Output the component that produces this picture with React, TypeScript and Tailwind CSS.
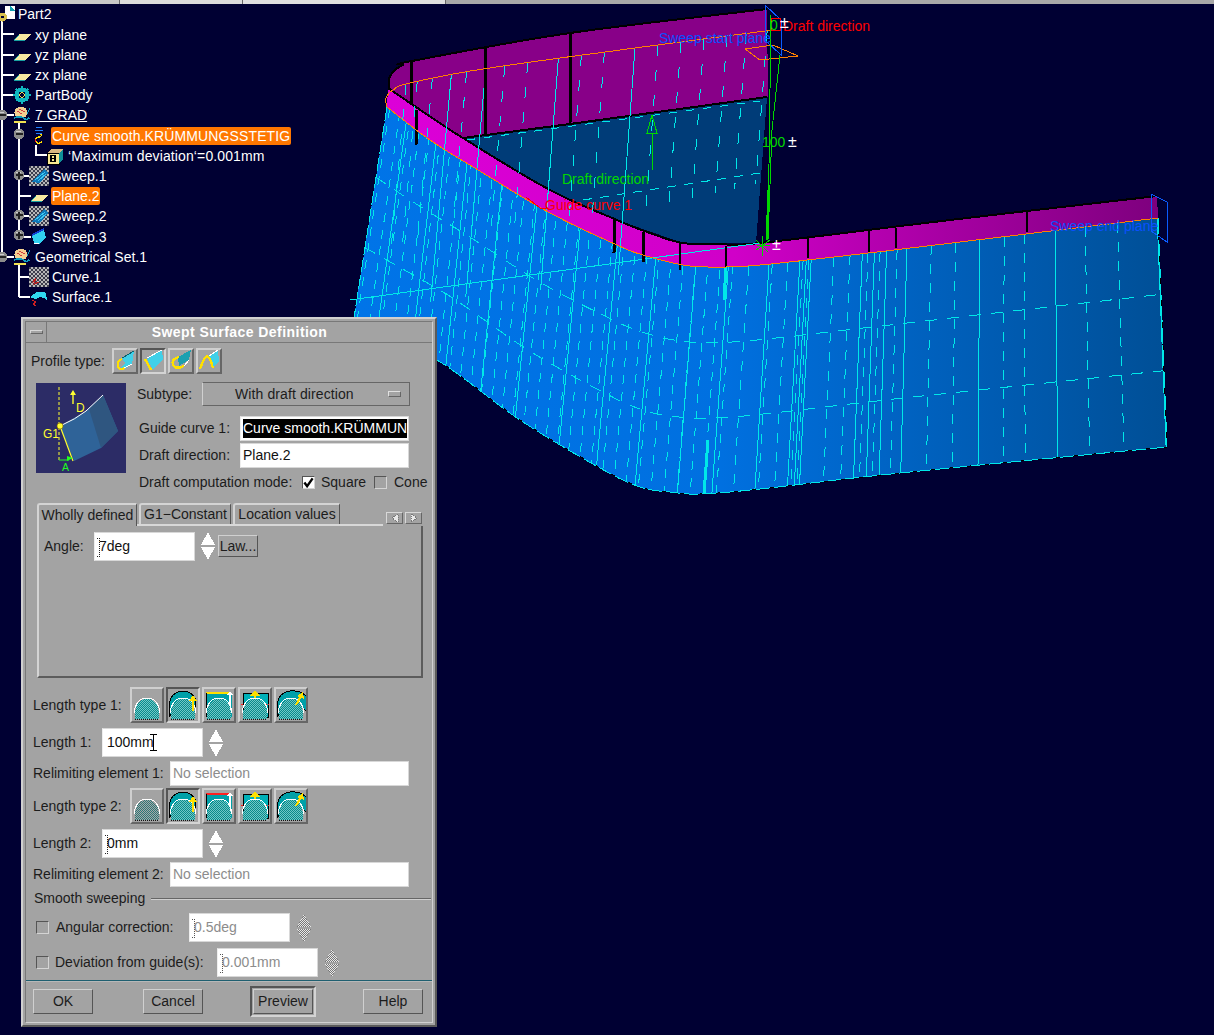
import React from "react";

type P = [number, number];
const FONT = { fontFamily: '"Liberation Sans", Arial, sans-serif' };

function smooth(p: P[], n = 8): P[] {
  const out: P[] = [];
  for (let i = 0; i < p.length - 1; i++) {
    const a = p[Math.max(i - 1, 0)], b = p[i], c = p[i + 1], d = p[Math.min(i + 2, p.length - 1)];
    for (let k = 0; k < n; k++) {
      const t = k / n, t2 = t * t, t3 = t2 * t;
      const f = (j: 0 | 1) => 0.5 * (2 * b[j] + (c[j] - a[j]) * t + (2 * a[j] - 5 * b[j] + 4 * c[j] - d[j]) * t2 + (3 * b[j] - a[j] - 3 * c[j] + d[j]) * t3);
      out.push([+f(0).toFixed(1), +f(1).toFixed(1)]);
    }
  }
  out.push(p[p.length - 1]);
  return out;
}

const sheetTop = smooth([[387,107],[430,140],[483,173],[550,213],[617,245],[643,255],[683,265],[717,267],[760,265],[860,254],[960,242],[1158,218]]);
const sheetBot = smooth([[354,318],[437,360],[520,420],[600,468],[640,487],[670,492],[700,494],[760,489],[900,473],[1167,447]]);
const rimU = smooth([[393,92],[410,83],[483,69],[620,50],[773,30]]);
const rimV = smooth([[370,320],[440,300],[540,290],[650,268],[757,243]]);
const blackCurve = smooth([[388,88],[413,105],[463,138],[550,190],[617,220],[650,233],[683,243],[720,244],[760,243],[950,220],[1157,196]]);
const purpleTop = smooth([[389,90],[389,79],[395,70],[403,65],[412,61],[570,33],[767,9]]);

function at(poly: P[], t: number): P {
  let total = 0;
  for (let i = 1; i < poly.length; i++) total += Math.hypot(poly[i][0]-poly[i-1][0], poly[i][1]-poly[i-1][1]);
  let s = t * total;
  for (let i = 1; i < poly.length; i++) {
    const l = Math.hypot(poly[i][0]-poly[i-1][0], poly[i][1]-poly[i-1][1]);
    if (s <= l || i === poly.length-1) {
      const k = s / (l || 1);
      return [poly[i-1][0]+(poly[i][0]-poly[i-1][0])*k, poly[i-1][1]+(poly[i][1]-poly[i-1][1])*k];
    }
    s -= l;
  }
  return poly[poly.length-1];
}
const pts = (p: P[]) => p.map(q => q.join(",")).join(" ");
const seg = (a: P[], b: P[], t: number, v0 = 0, v1 = 1) => {
  const A = at(a,t), B = at(b,t);
  const m = (v:number) => [A[0]+(B[0]-A[0])*v, A[1]+(B[1]-A[1])*v].map(n=>n.toFixed(1)).join(",");
  return `M${m(v0)} L${m(v1)}`;
};
const across = (v:number) => {
  const out:string[] = [];
  for (let i=0;i<=100;i++){ const A=at(sheetTop,i/100),B=at(sheetBot,i/100); out.push(`${(A[0]+(B[0]-A[0])*v).toFixed(1)},${(A[1]+(B[1]-A[1])*v).toFixed(1)}`);}
  return "M"+out.join(" L");
};

const solid = [.03,.075,.12,.17,.22,.28,.33,.38,.43,.47,.52,.558,.566,.572,.635,.65,.665,.69,.78,.873,.999];
const dashedRight = [.495,.524,.543,.562,.569,.6,.62,.642,.657,.678,.72,.75,.81,.835,.91,.95];
const dashedLeft = Array.from({ length: 32 }, (_, i) => +(0.004 + i * 0.0152).toFixed(4));
const backSolid = [.16,.25,.44,.64];
const backDash = [.04,.07,.11,.2,.3,.36,.5,.56,.7,.76,.82,.88,.93,.985];

function Canvas() {
  return (
    <svg className="absolute left-0 top-0" width="1214" height="1035" viewBox="0 0 1214 1035" shapeRendering="crispEdges" style={FONT}>
      <defs>
        <linearGradient id="sheet" gradientUnits="userSpaceOnUse" x1="356" y1="0" x2="1167" y2="0">
          <stop offset="0" stopColor="#0074e8"/><stop offset=".45" stopColor="#0070e0"/><stop offset="1" stopColor="#004f96"/>
        </linearGradient>
        <linearGradient id="strip" gradientUnits="userSpaceOnUse" x1="388" y1="0" x2="1157" y2="0">
          <stop offset="0" stopColor="#dc00d8"/><stop offset=".45" stopColor="#d000c8"/><stop offset="1" stopColor="#7e007e"/>
        </linearGradient>
      </defs>
      <polygon points={pts([...purpleTop, [768,97],[570,124],[463,138],[413,105]])} fill="#880088"/>
      <polygon points="463,138 570,124 767,97 756,243 683,243 617,220 550,190" fill="#003c78"/>
      <polygon points={pts([...blackCurve, ...[...sheetTop].reverse()])} fill="url(#strip)"/>
      <polygon points={pts([...sheetTop, [1167,447], ...[...sheetBot].reverse()])} fill="url(#sheet)"/>

      <polyline points={pts(purpleTop)} fill="none" stroke="#000" strokeWidth="2"/>
      <path d="M463,138 L570,124 L767,97" fill="none" stroke="#000" strokeWidth="2"/>
      <polyline points={pts(blackCurve)} fill="none" stroke="#000" strokeWidth="2"/>

      <g stroke="#00e8e8" strokeWidth="1" fill="none">
        {solid.map(t => <path key={t} d={seg(sheetTop, sheetBot, t)}/>)}
        {dashedRight.map(t => <path key={t} d={seg(sheetTop, sheetBot, t)} strokeDasharray="10 9"/>)}
        {dashedLeft.map((t, i) => <path key={t} d={seg(sheetTop, sheetBot, t)} strokeDasharray="9 8" strokeDashoffset={i * 5}/>)}
        <path d={across(1/3)} strokeDasharray="12 10"/>
        <path d={across(2/3)} strokeDasharray="12 10"/>
        {backSolid.map(t => <path key={t} d={seg(rimU, rimV, t)}/>)}
        {backDash.map(t => <path key={t} d={seg(rimU, rimV, t, 0, .72)} strokeDasharray="11 14"/>)}
        <path d="M467,140 L760,101" strokeDasharray="8 9"/>
        <path d="M583,200 L760,173" strokeDasharray="9 8"/>
        <path d="M350,300 L760,243"/>
        <path d="M704,494 L708,440" strokeWidth="3"/>
        <path d="M726,267 L724,300" strokeWidth="3"/>
        <path d="M387,107 L354,318" strokeDasharray="14 3"/>
      </g>
      <polyline points={pts(sheetBot)} fill="none" stroke="#000" strokeWidth="1"/>
      <polyline points={pts(sheetBot)} fill="none" stroke="#00e8e8" strokeWidth="1" strokeDasharray="14 4"/>
      <path d="M1158,218 L1167,447" stroke="#000" fill="none"/>
      <path d="M1158,218 L1167,447" stroke="#00e8e8" fill="none" strokeDasharray="16 6"/>

      <g stroke="#000" strokeWidth="3" fill="none">
        <path d="M412,62 L411,105"/><path d="M485,47 L485,135"/><path d="M571,33 L570,124"/>
        <path d="M417,110 L416,145"/><path d="M615,220 L614,253"/><path d="M643,232 L643,262"/>
        <path d="M680,243 L680,270" strokeWidth="2"/><path d="M726,246 L726,267" strokeWidth="2"/>
        <path d="M808,238 L808,258" strokeWidth="2"/><path d="M869,231 L869,252" strokeWidth="2"/>
        <path d="M896,228 L896,248" strokeWidth="2"/><path d="M1027,212 L1027,232" strokeWidth="2"/>
      </g>
      <polyline points={pts(sheetTop)} fill="none" stroke="#ff8000" strokeWidth="1"/>
      <polyline points={pts(smooth([[387,107],[386,98],[393,90],[410,83],[483,69],[620,50],[773,30]]))} fill="none" stroke="#ff8000" strokeWidth="1"/>

      <polygon points="745,49 773,45 798,56 760,60" fill="none" stroke="#ff8000"/>
      <polygon points="765,5 781,20 781,55 765,40" fill="none" stroke="#0a5cff"/>
      <polygon points="1151,194 1167,202 1167,242 1151,231" fill="none" stroke="#0a5cff"/>

      <g stroke="#00d800" fill="none">
        <path d="M771,15 L768,240" strokeWidth="1"/>
        <path d="M780,55 L772,130 L768,240" strokeWidth="1"/>
        <path d="M768,190 L767,240" strokeWidth="2"/>
        <path d="M652,170 L652,133"/>
        <polygon points="652,115 657,133 647,133"/>
        <path d="M756,240 L768,252 M756,250 L770,240 M762,236 L762,256 M757,245 L770,246"/>
      </g>
      <path d="M526,197 L540,208 L547,208" fill="none" stroke="#ff0000"/>
      <rect x="771" y="18" width="9" height="12" fill="none" stroke="#ff0000"/>

      <g fontSize="14">
        <text x="659" y="43" fill="#0a50ff">Sweep start plane</text>
        <text x="783" y="31" fill="#ff0000">Draft direction</text>
        <text x="562" y="184" fill="#00d800">Draft direction</text>
        <text x="545" y="210" fill="#ff0000">Guide curve 1</text>
        <text x="1050" y="231" fill="#0a50ff">Sweep end plane</text>
        <text x="762" y="147" fill="#00d800">100</text>
        <text x="770" y="30" fill="#00d800">0</text>
      </g>
      <g fontSize="16" fill="#fff">
        <text x="788" y="147">±</text>
        <text x="780" y="28">±</text>
        <text x="772" y="250">±</text>
      </g>
    </svg>
  );
}

/* ---------- tree icons ---------- */
const Ico = ({ children }: { children: React.ReactNode }) => (
  <svg className="w-[18px] h-[18px] shrink-0" viewBox="0 0 18 18" shapeRendering="crispEdges">{children}</svg>
);
const PlaneIco = () => <Ico><polygon points="1,14 13,14 18,8 6,8" fill="#f8e8a0"/><path d="M1,14 L12,14 M1,14 L6,9" stroke="#1aa0a0" fill="none"/></Ico>;
const GearIco = () => <Ico><circle cx="9" cy="9" r="7.5" fill="#10b8c0"/><path d="M9,0 V18 M0,9 H18 M3,3 L15,15 M15,3 L3,15" stroke="#10b8c0" strokeWidth="2"/><circle cx="9" cy="9" r="3.4" fill="#000033"/><circle cx="9" cy="9" r="2.2" fill="none" stroke="#f0e050"/></Ico>;
const SetIco = () => <Ico><ellipse cx="8" cy="6.5" rx="6.5" ry="6" fill="#f4d090"/><path d="M4,5 L9,8 M6,3 L12,6" stroke="#d04040"/><path d="M1,12 Q7,9 12,13 Q14,14 16,12" stroke="#10a0c0" strokeWidth="1.5" fill="none"/><path d="M1,16 H13" stroke="#f0e050" strokeWidth="2"/><path d="M14,8 L17,2" stroke="#10a0c0"/></Ico>;
const SmoothIco = () => <Ico><path d="M6,1 L12,0 M5,4 L13,3 M6,6 H12" stroke="#2080ff" fill="none"/><path d="M10,7 Q13,9 9,10 Q3,12 7,16 Q11,17 12,14" stroke="#ffe000" strokeWidth="1.4" fill="none"/><path d="M5,12 L5,15" stroke="#ff2020"/></Ico>;
const Checker = ({id}:{id:string}) => <><defs><pattern id={id} width="4" height="4" patternUnits="userSpaceOnUse"><rect width="4" height="4" fill="#b8b8b8"/><rect width="2" height="2" fill="#3c3c4c"/><rect x="2" y="2" width="2" height="2" fill="#3c3c4c"/></pattern></defs><rect x="0" y="0" width="20" height="20" fill={`url(#${id})`}/></>;
const SweepIco = ({id}:{id:string}) => <svg className="w-[20px] h-[20px] shrink-0 -mx-px" viewBox="0 0 20 20" shapeRendering="crispEdges"><Checker id={id}/><polygon points="3,16 15,3 19,7 11,17" fill="#0f78b8"/><path d="M6,14 L16,6 M9,15 L17,8" stroke="#40c8f0"/></svg>;
const Sweep3Ico = () => <Ico><polygon points="2,8 14,2 16,10 9,16 4,15" fill="#30d0f0"/><path d="M2,7 L14,1" stroke="#1040d0" strokeWidth="2"/><path d="M4,15 L9,16" stroke="#fff"/></Ico>;
const Curve1Ico = () => <svg className="w-[20px] h-[20px] shrink-0 -mx-px" viewBox="0 0 20 20" shapeRendering="crispEdges"><Checker id="chk-curve"/><path d="M3,16 L7,11 L5,17 L10,15" stroke="#c02020" fill="none"/></svg>;
const SurfIco = () => <Ico><path d="M1,9 Q7,1 16,5 L17,12 Q11,7 6,11 L1,10 Z" fill="#30d8f0"/><path d="M2,12 L6,14 L3,16 L6,18" stroke="#d02020" fill="none"/></Ico>;
const CubeIco = () => <Ico><polygon points="1,6 5,2 17,2 17,12 13,17 1,17" fill="#d8b880"/><rect x="1" y="6" width="12" height="11" fill="#f8e890" stroke="#000"/><polygon points="13,6 17,2 17,12 13,17" fill="#109098"/><path d="M5,8.5 H9 V14.5 H5 Z M5,11.5 H9" stroke="#000" fill="none" strokeWidth="1.4"/></Ico>;
const PartIco = () => <svg className="w-[16px] h-[18px] shrink-0" viewBox="0 0 16 18" shapeRendering="crispEdges"><rect x="5" y="1" width="10" height="13" fill="#fff"/><polygon points="10,1 15,6 10,6" fill="#10a0b0"/><circle cx="2.5" cy="12" r="4.5" fill="#d8c050"/><circle cx="2.5" cy="12" r="1.5" fill="#000033"/></svg>;

type Row = { label: string; level: number; icon: React.ReactNode; hl?: boolean; u?: boolean; wide?: boolean };
const rows: Row[] = [
  { label: "Part2", level: 0, icon: <PartIco/> },
  { label: "xy plane", level: 1, icon: <PlaneIco/> },
  { label: "yz plane", level: 1, icon: <PlaneIco/> },
  { label: "zx plane", level: 1, icon: <PlaneIco/> },
  { label: "PartBody", level: 1, icon: <GearIco/> },
  { label: "7 GRAD", level: 1, icon: <SetIco/>, u: true },
  { label: "Curve smooth.KRÜMMUNGSSTETIG", level: 2, icon: <SmoothIco/>, hl: true, wide: true },
  { label: "‘Maximum deviation‘=0.001mm", level: 3, icon: <CubeIco/>, wide: true },
  { label: "Sweep.1", level: 2, icon: <SweepIco id="chk-s1"/> },
  { label: "Plane.2", level: 2, icon: <PlaneIco/>, hl: true },
  { label: "Sweep.2", level: 2, icon: <SweepIco id="chk-s2"/> },
  { label: "Sweep.3", level: 2, icon: <Sweep3Ico/> },
  { label: "Geometrical Set.1", level: 1, icon: <SetIco/> },
  { label: "Curve.1", level: 2, icon: <Curve1Ico/> },
  { label: "Surface.1", level: 2, icon: <SurfIco/> },
];
const indent = ["pl-0", "pl-[13px]", "pl-[30px]", "pl-[46px]"];

const Knob = ({ x, y, plus }: { x: number; y: number; plus?: boolean }) => (
  <g>
    <circle cx={x} cy={y} r="5.5" fill="#8c8c8c"/>
    <path d={`M${x-3},${y-3} h5`} stroke="#ccc"/>
    <path d={`M${x-3.5},${y} h7`} stroke="#222" strokeWidth="1.4"/>
    {plus && <path d={`M${x},${y-3.5} v7`} stroke="#222" strokeWidth="1.4"/>}
  </g>
);

function Tree() {
  return (
    <div className="absolute left-0 top-[4.4px] w-[320px]" style={FONT}>
      <svg className="absolute left-0 top-[-4.4px]" width="60" height="310" shapeRendering="crispEdges">
        <g stroke="#fff" strokeWidth="2" fill="none">
          <path d="M2,20 V257"/>
          <path d="M2,34 H14 M2,55 H14 M2,75 H14 M2,95 H14"/>
          <path d="M19,122 V237 M19,176 H31 M19,196 H31 M19,216 H31 M19,237 H31"/>
          <path d="M2,115 H14 M2,257 H14"/>
          <path d="M19,263 V297 M19,277 H30 M19,297 H30"/>
          <path d="M36,145 V155 H47"/>
        </g>
        <Knob x={2} y={115}/><Knob x={2} y={257}/>
        <Knob x={19} y={134}/><Knob x={19} y={175} plus/><Knob x={19} y={215} plus/><Knob x={19} y={235} plus/>
      </svg>
      <div className="relative flex flex-col">
        {rows.map(r => (
          <div key={r.label} className={`h-[20.2px] flex items-center ${indent[r.level]}`}>
            {r.icon}
            <span className={`${r.level === 0 ? "ml-[2px]" : r.hl ? "ml-[3px]" : "ml-[4px]"} whitespace-nowrap text-[14px] leading-[18px] text-white ${r.hl ? "bg-[#ff7700] rounded-[2px] px-px" : ""} ${r.wide ? "tracking-[0.12px]" : ""} ${r.u ? "underline" : ""}`}>{r.label}</span>
          </div>
        ))}
      </div>
    </div>
  );
}

/* ---------- dialog pieces ---------- */
const RAISED = "border-2 border-[#cfcfcf] border-r-[#666] border-b-[#666]";
const SUNK = "border-2 border-[#555] border-r-[#d4d4d4] border-b-[#d4d4d4]";

function Spinner({ disabled }: { disabled?: boolean }) {
  const id = React.useId();
  const fill = disabled ? `url(#${id})` : "#fff";
  return (
    <svg className="w-[14px] h-[28px] shrink-0" viewBox="0 0 14 28" shapeRendering="crispEdges">
      {disabled && <defs><pattern id={id} width="2" height="2" patternUnits="userSpaceOnUse"><rect width="2" height="2" fill="#e8e8e8"/><rect width="1" height="1" fill="#777"/><rect x="1" y="1" width="1" height="1" fill="#777"/></pattern></defs>}
      <polygon points="7,0 14,13 0,13" fill={fill}/>
      <polygon points="0,15 14,15 7,28" fill={fill}/>
    </svg>
  );
}
const Caret = ({ dim }: { dim?: boolean }) => (
  <svg className="w-[5px] h-[20px] shrink-0 -mr-[3px]" viewBox="0 0 5 20" shapeRendering="crispEdges">
    <path d="M0,1 H4 M2,1 V19 M0,19 H4" stroke={dim ? "#555" : "#222"} strokeDasharray="1 1" fill="none"/>
  </svg>
);
function Field({ w, h = "h-[29px]", disabled, children }: { w: string; h?: string; disabled?: boolean; children: React.ReactNode }) {
  return (
    <div className={`${w} ${h} relative shrink-0 bg-white border border-[#d8d8d8] border-l-[#eee] flex items-center pl-[2px] overflow-hidden text-[14px] whitespace-nowrap ${disabled ? "text-[#8c8c8c]" : "text-[#111]"}`}>
      {children}
    </div>
  );
}
const Label = ({ w, children }: { w: string; children: React.ReactNode }) => (
  <span className={`${w} shrink-0 whitespace-nowrap text-[14px] text-[#1c1c1c]`}>{children}</span>
);
const Check = ({ on }: { on?: boolean }) => (
  <span className={`w-[13px] h-[13px] shrink-0 flex items-center justify-center border border-[#555] border-r-[#d4d4d4] border-b-[#d4d4d4] ${on ? "bg-white" : ""}`}>
    {on && <svg viewBox="0 0 12 12" className="w-[11px] h-[11px]"><path d="M1.5,6 L4.5,10 L10.5,1.5" stroke="#000" strokeWidth="2.6" fill="none"/></svg>}
  </span>
);
function Btn({ w = "w-[60px]", children }: { w?: string; children: React.ReactNode }) {
  return <div className={`${w} h-[25px] shrink-0 border border-[#d0d0d0] border-r-[#555] border-b-[#555] flex items-center justify-center text-[14px] text-[#1c1c1c]`}>{children}</div>;
}

const Box = ({ pressed, w, children }: { pressed?: boolean; w: string; children: React.ReactNode }) => (
  <div className={`${w} shrink-0 flex items-center justify-center ${pressed ? SUNK : RAISED}`}>{children}</div>
);
const ProfIco = ({ n }: { n: number }) => (
  <svg viewBox="0 0 22 22" className="w-[22px] h-[22px]" shapeRendering="crispEdges">
    {n === 0 && <><polygon points="8,8 20,1 18,14 9,20 7,17 11,13" fill="#40d0e8"/><path d="M8,9 Q2,11 4,17 Q7,21 10,18" stroke="#ffe000" strokeWidth="2" fill="none"/><path d="M8,8 L20,1" stroke="#0a6070"/><path d="M10,18 L18,14" stroke="#fff"/></>}
    {n === 1 && <><polygon points="5,9 20,0 21,9 11,20" fill="#40d0e8"/><path d="M3,9 L9,20" stroke="#ffe000" strokeWidth="2.4"/><path d="M5,8 L20,0" stroke="#fff"/></>}
    {n === 2 && <><polygon points="8,7 21,0 19,10 9,16" fill="#1ca0b0"/><path d="M9,7 Q1,9 3,15 Q6,20 14,16" stroke="#ffe000" strokeWidth="2.4" fill="none"/><path d="M14,16 L19,10" stroke="#fff"/></>}
    {n === 3 && <><polygon points="11,6 20,0 21,11 15,18" fill="#40d0e8"/><path d="M2,19 Q6,7 9,6 Q12,7 15,18" stroke="#ffe000" strokeWidth="2.4" fill="none"/><path d="M11,6 L20,0" stroke="#fff"/></>}
  </svg>
);
function LenIco({ n, k }: { n: number; k: string }) {
  const id = `dome-${k}-${n}`;
  const gray = k === "b" && n === 0;
  return (
    <svg viewBox="0 0 30 32" className="w-[30px] h-[32px]" shapeRendering="crispEdges">
      <defs><pattern id={id} width="2" height="2" patternUnits="userSpaceOnUse"><rect width="2" height="2" fill={gray ? "#a8a8a8" : "#70c8c8"}/><rect width="1" height="1" fill={gray ? "#2a7878" : "#0a8a8a"}/><rect x="1" y="1" width="1" height="1" fill={gray ? "#2a7878" : "#0a8a8a"}/></pattern></defs>
      {n === 1 && <path d="M1,28 V16 Q3,3 14,2 Q23,2 27,9 V17 L22,15 Q14,8 1,28 Z" fill="#00a0a8" stroke="#000"/>}
      {n === 2 && <><rect x="2" y="4" width="26" height="24" fill="#00a0a8"/><path d="M2,4 H27" stroke={k==="a"?"#ffe000":"#ff2020"} strokeWidth="2"/><path d="M2,4 V28" stroke="#000"/><path d="M26,6 V28" stroke="#fff" strokeWidth="2"/><polygon points="26,2 29,6 23,6" fill="#fff"/></>}
      {n === 3 && <><rect x="3" y="4" width="25" height="24" fill="#00b0b8" stroke="#000"/><path d="M1,15 H29" stroke="#ff2020" strokeDasharray="2 1"/><path d="M15,6 V16" stroke="#ffe000" strokeWidth="2.4"/><polygon points="15,1 20,7 10,7" fill="#ffe000"/></>}
      {n === 4 && <path d="M1,28 V16 Q3,3 14,2 Q24,1 30,7 V22 L25,17 Q14,8 1,28 Z" fill="#00a0a8" stroke="#000"/>}
      <path d="M3,30 Q2,10 15,10 Q28,10 27,30 Z" fill={`url(#${id})`}/>
      <path d="M2,24 Q4,9 15,9 Q26,9 28,24" fill="none" stroke="#fff"/>
      <path d="M3,30 H27" stroke="#111" strokeDasharray="1 1"/>
      {n === 1 && <><path d="M25,22 V10" stroke="#ffe000" strokeWidth="2"/><polygon points="25,6 29,12 21,12" fill="#ffe000"/></>}
      {n === 4 && <><path d="M20,16 L25,7" stroke="#ffe000" strokeWidth="2"/><polygon points="27,3 28,10 21,7" fill="#ffe000"/></>}
    </svg>
  );
}
const LenRow = ({ k, label, pressed }: { k: string; label: string; pressed: number }) => (
  <div className="flex items-center h-[36px] pl-[7px]">
    <Label w="w-[97px]">{label}</Label>
    <div className="flex gap-[2px]">
      {[0,1,2,3,4].map(n => <Box key={n} pressed={n === pressed} w="w-[34px] h-[36px]"><LenIco n={n} k={k}/></Box>)}
    </div>
  </div>
);
const NoSel = ({ label, mt }: { label: string; mt: string }) => (
  <div className={`flex items-center pl-[7px] ${mt}`}>
    <Label w="w-[137px]">{label}</Label>
    <Field w="w-[239px]" h="h-[25px]" disabled>No selection</Field>
  </div>
);

const SmallArrow = ({ flip }: { flip?: boolean }) => (
  <div className="w-[17px] h-[12px] border border-[#d8d8d8] border-r-[#666] border-b-[#666] flex items-center justify-center">
    <svg viewBox="0 0 8 8" className={`w-[8px] h-[8px] ${flip ? "rotate-180" : ""}`} shapeRendering="crispEdges"><polygon points="1,4 7,0 7,8" fill="#e8e8e8" stroke="#777" strokeDasharray="1 1"/></svg>
  </div>
);

function Illustration() {
  return (
    <svg viewBox="0 0 90 90" className="w-[90px] h-[90px] shrink-0 mt-px" style={FONT}>
      <rect width="90" height="90" fill="#2c2c66"/>
      <polygon points="24,43 50,28 67,12 82,48 65,65 38,78" fill="#2f6398"/>
      <polygon points="53,26 67,12 82,48 65,65" fill="#2f5680"/>
      <path d="M24,43 Q40,36 50,28 L67,12" stroke="#fff" fill="none"/>
      <path d="M23,4 V78" stroke="#ffff30" strokeDasharray="3 2" fill="none"/>
      <path d="M24,43 L37,78" stroke="#ffff30" strokeWidth="1.2" fill="none"/>
      <circle cx="24" cy="43" r="3" fill="#ffff30" stroke="#806000" strokeWidth=".6"/>
      <path d="M37,21 V9" stroke="#ffff30" strokeWidth="1.4"/><polygon points="37,7 40,12 34,12" fill="#ffff30"/>
      <text x="40" y="29" fontSize="12" fill="#ffff30">D</text>
      <text x="7" y="55" fontSize="12" fill="#ffff30">G1</text>
      <path d="M23,77 H33" stroke="#20ff20"/><polygon points="37,75 31,73 31,78" fill="#20ff20"/>
      <text x="26" y="87.5" fontSize="10.5" fill="#20ff20">A</text>
    </svg>
  );
}

function Dialog() {
  return (
    <div className="absolute left-[21px] top-[317px] w-[416px] h-[710px] bg-[#a3a3a3] border-2 border-[#d0d0d0] border-r-[#5a5a5a] border-b-[#5a5a5a] p-[2px]" style={FONT}>
      <div className="h-full border border-[#787878] border-r-[#d0d0d0] border-b-[#d0d0d0] flex flex-col">
        <div className="h-[21px] flex shrink-0 border-b border-[#787878]">
          <div className="w-[21px] flex items-center justify-center border-r border-[#787878]">
            <div className="w-[13px] h-[4px] border border-[#d8d8d8] border-r-[#666] border-b-[#666]"/>
          </div>
          <div className="flex-1 flex items-center justify-center text-[14px] font-bold tracking-[0.45px] text-white">Swept Surface Definition</div>
        </div>

        <div className="mt-[5px] flex items-center h-[26px] pl-[5px]">
          <Label w="w-[81px]">Profile type:</Label>
          <div className="flex gap-[2px]">
            {[0,1,2,3].map(n => <Box key={n} pressed={n === 1} w="w-[26px] h-[26px]"><ProfIco n={n}/></Box>)}
          </div>
        </div>

        <div className="mt-[8px] flex pl-[10px]">
          <Illustration/>
          <div className="ml-[11px] flex flex-col">
            <div className="flex items-center h-[24px]">
              <Label w="w-[65px]">Subtype:</Label>
              <div className="w-[208px] h-[24px] border border-[#d0d0d0] border-t-[#666] border-l-[#d0d0d0] border-r-[#666] border-b-[#666] flex items-center relative text-[14px] text-[#1c1c1c] tracking-[0.1px]">
                <span className="ml-[32px]">With draft direction</span>
                <span className="absolute right-[8px] top-[8px] w-[13px] h-[6px] border border-[#e0e0e0] border-r-[#666] border-b-[#666]"/>
              </div>
            </div>
            <div className="mt-[10px] flex items-center pl-[2px]">
              <Label w="w-[101px]">Guide curve 1:</Label>
              <Field w="w-[169px]" h="h-[25px]">
                <span className="bg-black text-white w-[164px] overflow-hidden h-[19px] leading-[19px] block">Curve smooth.KRÜMMUNGSSTETIG</span>
              </Field>
            </div>
            <div className="mt-[2px] flex items-center pl-[2px]">
              <Label w="w-[101px]">Draft direction:</Label>
              <Field w="w-[169px]" h="h-[25px]">Plane.2</Field>
            </div>
            <div className="mt-[2px] h-[24px] flex items-center pl-[2px]">
              <Label w="w-[163px]">Draft computation mode:</Label>
              <Check on/>
              <span className="ml-[6px] w-[53px] text-[14px] text-[#1c1c1c]">Square</span>
              <Check/>
              <span className="ml-[7px] text-[14px] text-[#1c1c1c]">Cone</span>
            </div>
          </div>
        </div>

        <div className="mt-[9px] ml-[11px] mr-[9px] flex items-end h-[23px] text-[14px] text-[#1c1c1c]">
          <div className="w-[100px] h-[23px] border-t-2 border-l-2 border-[#d4d4d4] border-r border-r-[#555] rounded-tl-[3px] flex items-center justify-center whitespace-nowrap">Wholly defined</div>
          <div className="w-[246px] h-[23px] flex border-b-2 border-[#d8d8d8]">
            <div className="ml-[2px] w-[92px] h-[21px] border-t-2 border-l-2 border-[#d4d4d4] border-r border-r-[#555] rounded-tl-[3px] flex items-center justify-center whitespace-nowrap">G1−Constant</div>
            <div className="ml-[2px] w-[107px] h-[21px] border-t-2 border-l-2 border-[#d4d4d4] border-r border-r-[#555] rounded-tl-[3px] flex items-center justify-center whitespace-nowrap">Location values</div>
          </div>
          <div className="ml-[3px] mb-[2px] flex gap-[2px]"><SmallArrow/><SmallArrow flip/></div>
        </div>
        <div className="ml-[11px] mr-[9px] h-[152px] border-l-2 border-[#d4d4d4] border-r-2 border-r-[#5c5c5c] border-b-2 border-b-[#5c5c5c] pt-[6px] pl-[5px] flex items-start">
          <Label w="w-[50px] leading-[28px]">Angle:</Label>
          <Field w="w-[101px]"><Caret/>7deg</Field>
          <div className="ml-[6px]"><Spinner/></div>
          <div className="ml-[3px] mt-[3px] w-[40px] h-[22px] border border-[#d0d0d0] border-r-[#555] border-b-[#555] flex items-center justify-center text-[14px] text-[#1c1c1c]">Law...</div>
        </div>

        <div className="mt-[9px]"><LenRow k="a" label="Length type 1:" pressed={1}/></div>
        <div className="mt-[5px] flex items-center pl-[7px]">
          <Label w="w-[69px]">Length 1:</Label>
          <Field w="w-[101px]"><span className="ml-[2px]">100mm</span>
            <svg className="absolute left-[47px] top-[4px] w-[7px] h-[18px]" viewBox="0 0 7 18" shapeRendering="crispEdges"><path d="M0,1 H7 M3.5,1 V17 M0,17 H7" stroke="#000" fill="none"/></svg>
          </Field>
          <div className="ml-[6px]"><Spinner/></div>
        </div>
        <NoSel label="Relimiting element 1:" mt="mt-[4px]"/>
        <div className="mt-[2px]"><LenRow k="b" label="Length type 2:" pressed={1}/></div>
        <div className="mt-[5px] flex items-center pl-[7px]">
          <Label w="w-[69px]">Length 2:</Label>
          <Field w="w-[101px]"><Caret/>0mm</Field>
          <div className="ml-[6px]"><Spinner/></div>
        </div>
        <NoSel label="Relimiting element 2:" mt="mt-[4px]"/>

        <div className="h-[23px] flex items-center pl-[8px] pr-[1px]">
          <span className="text-[14px] text-[#1c1c1c] whitespace-nowrap">Smooth sweeping</span>
          <div className="ml-[6px] flex-1 h-[2px] bg-[#d0d0d0] border-t border-[#666]"/>
        </div>

        <div className="mt-[3px] flex items-center pl-[10px]">
          <Check/>
          <span className="ml-[7px] w-[133px] text-[14px] text-[#1c1c1c] whitespace-nowrap">Angular correction:</span>
          <Field w="w-[101px]" disabled><Caret dim/>0.5deg</Field>
          <div className="ml-[7px]"><Spinner disabled/></div>
        </div>
        <div className="mt-[6px] flex items-center pl-[10px]">
          <Check/>
          <span className="ml-[6px] w-[162px] text-[14px] text-[#1c1c1c] whitespace-nowrap">Deviation from guide(s):</span>
          <Field w="w-[101px]" disabled><Caret dim/>0.001mm</Field>
          <div className="ml-[7px]"><Spinner disabled/></div>
        </div>

        <div className="mt-[3px] h-[2px] bg-[#1f5f70] border-b border-[#b8b8b8]"/>
        <div className="mt-[4px] flex items-center h-[31px] pl-[7px]">
          <Btn>OK</Btn>
          <div className="ml-[50px]"><Btn>Cancel</Btn></div>
          <div className="ml-[47px] border-2 border-[#555] border-r-[#d4d4d4] border-b-[#d4d4d4] p-px"><Btn>Preview</Btn></div>
          <div className="ml-[47px]"><Btn>Help</Btn></div>
        </div>
      </div>
    </div>
  );
}

export default function App() {
  return (
    <div className="relative w-[1214px] h-[1035px] overflow-hidden bg-[#000033]">
      <Canvas/>
      <div className="relative h-[4px] flex bg-[#a8a8a8]">
        <div className="w-[120px] bg-[#c8c8c8] border-r border-[#666]"/>
        <div className="w-[123px] bg-[#dcdcdc] border-r border-[#666]"/>
        <div className="w-[203px] bg-[#e0e0e0] border-r border-[#666]"/>
      </div>
      <Tree/>
      <Dialog/>
    </div>
  );
}
